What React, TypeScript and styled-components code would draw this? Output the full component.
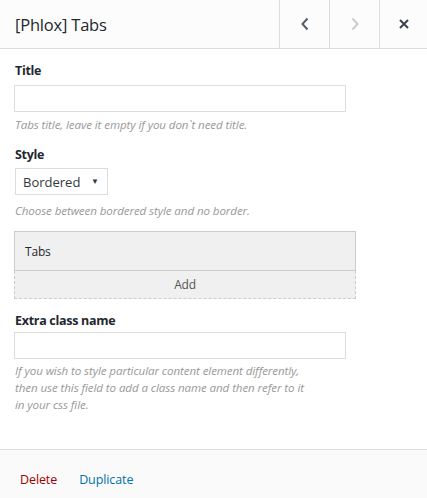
import React from "react";
import styled, { createGlobalStyle } from "styled-components";

const Global = createGlobalStyle`
  html, body { margin: 0; padding: 0; background: #ffffff; }
  body { font-family: "Open Sans", "Noto Sans", sans-serif; color: #32373c; }
  * { box-sizing: border-box; }
`;

const Panel = styled.div`
  width: 427px;
  height: 498px;
  display: flex;
  flex-direction: column;
  background: #ffffff;
`;

const Header = styled.header`
  height: 49px;
  display: flex;
  align-items: stretch;
  background: #fcfcfc;
  border-bottom: 1px solid #dddddd;
  flex-shrink: 0;
`;

const Heading = styled.h1`
  flex: 1;
  margin: 0;
  padding: 0 0 0 15px;
  display: flex;
  align-items: center;
  font-size: 16.5px;
  font-weight: 400;
  color: #23282d;
  letter-spacing: -0.2px;
`;

const NavButton = styled.button<{ $disabled?: boolean; $w?: number }>`
  width: ${(p) => p.$w ?? 50}px;
  border: none;
  border-left: 1px solid #dddddd;
  background: transparent;
  padding: 0;
  display: flex;
  align-items: center;
  justify-content: center;
  color: ${(p) => (p.$disabled ? "#cccccc" : "#555d66")};
  cursor: pointer;
`;

const Body = styled.main`
  flex: 1;
  padding: 0 15px;
`;

const Label = styled.div<{ $top: number }>`
  margin-top: ${(p) => p.$top}px;
  font-size: 12.5px;
  line-height: 20px;
  font-weight: 700;
  color: #23282d;
  letter-spacing: -0.3px;
`;

const TextInput = styled.input<{ $top?: number }>`
  display: block;
  margin: ${(p) => p.$top ?? 4}px 0 0 -1px;
  width: 332px;
  height: 27px;
  border: 1px solid #dddddd;
  background: #fff;
  padding: 0 6px;
  font: inherit;
  outline: none;
`;

const Hint = styled.p<{ $top: number }>`
  margin: ${(p) => p.$top}px 0 0;
  font-size: 11.6px;
  line-height: 17px;
  font-style: italic;
  color: #999999;
  letter-spacing: -0.1px;
`;

const SelectBox = styled.div`
  margin-top: 3px;
  width: 93px;
  height: 27px;
  border: 1px solid #dddddd;
  background: #fff;
  display: flex;
  align-items: center;
  justify-content: space-between;
  padding: 0 8px 0 7px;
  font-size: 13px;
  color: #32373c;
`;

const Caret = styled.span`
  font-size: 8px;
  color: #32373c;
  margin-top: -2px;
`;

const Group = styled.div`
  margin-top: 12px;
  margin-left: -1px;
  width: 342px;
`;

const GroupHead = styled.div`
  height: 40px;
  background: #f0f0f0;
  border: 1px solid #cccccc;
  display: flex;
  align-items: center;
  padding-left: 10px;
  font-size: 12px;
  color: #23282d;
  letter-spacing: -0.2px;
`;

const AddRow = styled.div`
  height: 28px;
  background: #f0f0f0;
  border: 1px dashed #cccccc;
  border-top: none;
  display: flex;
  align-items: center;
  justify-content: center;
  font-size: 12px;
  color: #555555;
  letter-spacing: -0.2px;
`;

const Footer = styled.footer`
  height: 49px;
  flex-shrink: 0;
  background: #fafafa;
  border-top: 1px solid #dddddd;
  display: flex;
  align-items: center;
  padding: 10px 0 0 20px;
  gap: 22px;
`;

const FooterLink = styled.a<{ $danger?: boolean }>`
  font-size: 12.5px;
  color: ${(p) => (p.$danger ? "#a00000" : "#0073aa")};
  text-decoration: none;
  letter-spacing: -0.1px;
  cursor: pointer;
`;

export default function App() {
  return (
    <>
      <Global />
      <Panel>
        <Header>
          <Heading>[Phlox] Tabs</Heading>
          <NavButton aria-label="Previous">
            <svg width="10" height="14" viewBox="0 0 10 14" fill="none">
              <path d="M7.5 1.5 L2.5 7 L7.5 12.5" stroke="currentColor" strokeWidth="2" />
            </svg>
          </NavButton>
          <NavButton $disabled aria-label="Next">
            <svg width="10" height="14" viewBox="0 0 10 14" fill="none">
              <path d="M2.5 1.5 L7.5 7 L2.5 12.5" stroke="currentColor" strokeWidth="2" />
            </svg>
          </NavButton>
          <NavButton $w={48} aria-label="Close" style={{ color: "#3c434a" }}>
            <svg width="10" height="10" viewBox="0 0 10 10" fill="none">
              <path d="M1 1 L9 9 M9 1 L1 9" stroke="currentColor" strokeWidth="2" />
            </svg>
          </NavButton>
        </Header>
        <Body>
          <Label $top={12}>Title</Label>
          <TextInput />
          <Hint $top={4}>Tabs title, leave it empty if you don`t need title.</Hint>
          <Label $top={12}>Style</Label>
          <SelectBox>
            <span>Bordered</span>
            <Caret>▼</Caret>
          </SelectBox>
          <Hint $top={7}>Choose between bordered style and no border.</Hint>
          <Group>
            <GroupHead>Tabs</GroupHead>
            <AddRow>Add</AddRow>
          </Group>
          <Label $top={12}>Extra class name</Label>
          <TextInput $top={1} />
          <Hint $top={3}>
            If you wish to style particular content element differently,
            <br />
            then use this field to add a class name and then refer to it
            <br />
            in your css file.
          </Hint>
        </Body>
        <Footer>
          <FooterLink $danger>Delete</FooterLink>
          <FooterLink>Duplicate</FooterLink>
        </Footer>
      </Panel>
    </>
  );
}
